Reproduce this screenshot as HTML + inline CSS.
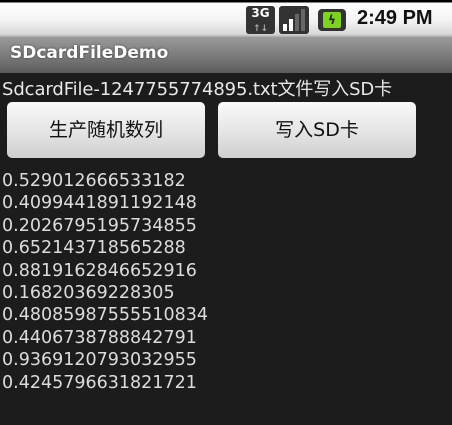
<!DOCTYPE html><html><head><style>
body{margin:0;width:452px;height:425px;background:#1c1c1c;overflow:hidden;position:relative;font-family:"DejaVu Sans","Noto Sans CJK SC",sans-serif}
.sb{position:absolute;left:0;top:0;width:452px;height:37px;background:linear-gradient(#000 0,#000 2px,#fff 3px,#f4f4f4 20px,#d8d8d8 34px,#aaa 37px)}
.tb{position:absolute;left:0;top:37px;width:452px;height:36px;background:linear-gradient(#9a9a9a,#777 60%,#5a5a5a)}
.tb span{position:absolute;left:10px;top:6px;color:#fff;font-weight:bold;font-size:17px;text-shadow:0 0 2px #333}
.t{position:absolute;left:2px;color:#e8e8e8;font-size:18px;white-space:nowrap;letter-spacing:-0.1px}
.btn{position:absolute;top:102px;width:198px;height:56px;border-radius:5px;background:linear-gradient(#fafafa,#e6e6e6 50%,#cfcfcf);color:#111;font-size:19px;text-align:center;line-height:56px}
.n{position:absolute;left:2px;top:170px;color:#dcdcdc;font-size:17.5px;line-height:22.4px}
</style></head><body>
<div class="sb">
<div style="position:absolute;left:246px;top:6px;width:29px;height:28px;background:#333;border-radius:3px;color:#fff;font:bold 12px 'DejaVu Sans';line-height:14px;text-align:center">3G<br><span style="font-size:9px;color:#aaa">↑↓</span></div>
<div style="position:absolute;left:279px;top:6px;width:30px;height:28px;background:#333;border-radius:3px"></div>
<div style="position:absolute;left:283px;top:24px;width:4px;height:7px;background:#fff"></div>
<div style="position:absolute;left:289px;top:19px;width:4px;height:12px;background:#fff"></div>
<div style="position:absolute;left:295px;top:14px;width:4px;height:17px;background:#666"></div>
<div style="position:absolute;left:301px;top:9px;width:4px;height:22px;background:#666"></div>
<div style="position:absolute;left:318px;top:9px;width:28px;height:22px;background:#333;border-radius:4px"></div>
<div style="position:absolute;left:323px;top:12px;width:18px;height:16px;background:#7ed321;border-radius:2px;color:#222;font:bold 12px 'DejaVu Sans';text-align:center;line-height:16px">ϟ</div>
<div style="position:absolute;left:357px;top:7px;font:bold 20px 'Liberation Sans';color:#111">2:49 PM</div>
</div>
<div class="tb"><span>SDcardFileDemo</span></div>
<div class="t" style="top:75px">SdcardFile-1247755774895.txt文件写入SD卡</div>
<div class="btn" style="left:7px">生产随机数列</div>
<div class="btn" style="left:218px">写入SD卡</div>
<div class="n">0.529012666533182<br>0.4099441891192148<br>0.2026795195734855<br>0.652143718565288<br>0.8819162846652916<br>0.16820369228305<br>0.48085987555510834<br>0.4406738788842791<br>0.9369120793032955<br>0.4245796631821721</div>
</body></html>
